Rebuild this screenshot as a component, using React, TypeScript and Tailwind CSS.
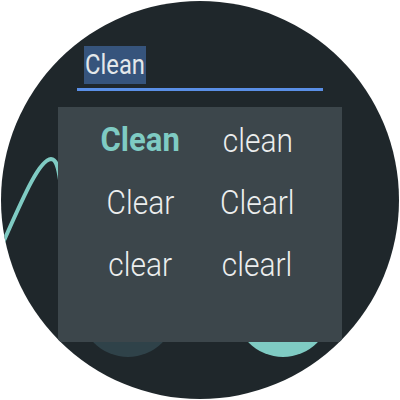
import React from 'react'

const suggestions = [
  { text: 'Clean', primary: true },
  { text: 'clean' },
  { text: 'Clear' },
  { text: 'Clearl' },
  { text: 'clear' },
  { text: 'clearl' },
]

function FaceBackground() {
  // watch face content sitting behind the suggestion popup
  return (
    <svg className="absolute inset-0" width="398" height="398" viewBox="1 1 398 398">
      <path
        d="M -2 254 C 20 205, 38 160, 51 159 C 56 159, 58 166, 60 180"
        fill="none"
        stroke="#7fcbc3"
        strokeWidth={4}
        strokeLinecap="round"
      />
      <circle cx="128" cy="309" r="48" fill="#2f4249" />
      <circle cx="283" cy="309" r="48" fill="#7fcbc3" />
    </svg>
  )
}

export default function App() {
  return (
    <div className="w-[400px] h-[400px] bg-white p-px font-['Roboto',sans-serif]">
      <div className="relative w-[398px] h-[398px] rounded-full bg-[#1f272b] overflow-hidden">
        <FaceBackground />
        <div className="relative flex flex-col">
          <div className="ml-[76px] mt-[45px] w-[246px] flex flex-col">
            <div className="pl-[7px] flex">
              <span className="w-[62px] h-[38px] bg-[#36547c] flex justify-center">
                <span className="inline-block leading-[38px] text-[27px] text-[#e4e8ea] scale-x-[0.88]">
                  Clean
                </span>
              </span>
            </div>
            <div className="mt-[4px] h-[3px] bg-[#5a8fe6]" />
          </div>
          <div className="ml-[57px] mt-[16px] w-[284px] h-[235px] bg-[#3c464b] pt-[2px] pl-[24px]">
            <div className="grid grid-cols-[117px_117px]">
              {suggestions.map((s) => (
                <div key={s.text} className="h-[62px] leading-[62px] text-center">
                  {s.primary ? (
                    <span className="inline-block text-[33px] font-bold text-[#7fcbc3] scale-x-[0.94]">
                      {s.text}
                    </span>
                  ) : (
                    <span className="inline-block text-[34px] font-light text-[#eceeee] scale-x-[0.88]">
                      {s.text}
                    </span>
                  )}
                </div>
              ))}
            </div>
          </div>
        </div>
      </div>
    </div>
  )
}
